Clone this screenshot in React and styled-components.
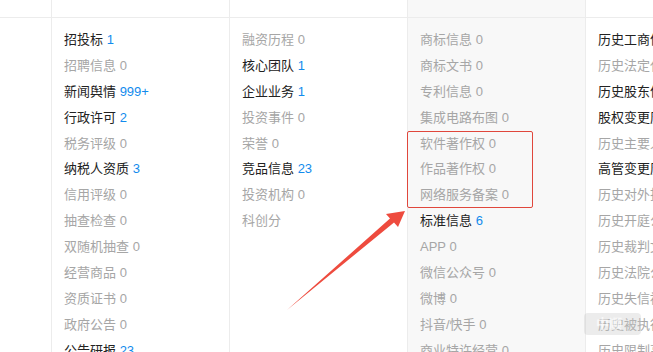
import React from "react";
import styled, { createGlobalStyle } from "styled-components";

const Global = createGlobalStyle`
  html, body { margin: 0; padding: 0; background: #fff; overflow: hidden; }
  body { width: 653px; height: 352px; font-family: "Liberation Sans", "Noto Sans CJK SC", sans-serif; }
  #root { position: relative; width: 653px; height: 352px; overflow: hidden; }
`;

const Table = styled.div`
  display: grid;
  grid-template-columns: 51px 178px 178px 178px 178px;
  margin-top: -30px;
  width: 764px;
`;

const HeadCell = styled.div`
  height: 48px;
  box-sizing: border-box;
  padding-bottom: 5px;
  border-bottom: 1px solid #ececec;
  border-left: ${(p) => (p.$first ? "none" : "1px solid #ececec")};
  background: ${(p) => (p.$active ? "#f8f8f8" : "#fff")};
  display: flex;
  align-items: center;
  justify-content: center;
  font-size: 14px;
  font-weight: bold;
  color: ${(p) => p.$color || "#222"};
`;

const Col = styled.div`
  border-left: ${(p) => (p.$first ? "none" : "1px solid #ececec")};
  background: ${(p) => (p.$active ? "#f8f8f8" : "#fff")};
  padding: 9px 0 0 12px;
  height: 400px;
`;

const Item = styled.div`
  height: 25.9px;
  line-height: 25.9px;
  font-size: 13px;
  white-space: nowrap;
  color: ${(p) => (p.$on ? "#222" : "#a6a6a6")};
`;

const Count = styled.span`
  color: ${(p) => (p.$on ? "#128bed" : "#a6a6a6")};
`;

const Mark = styled.div`
  position: absolute;
  left: 407px;
  top: 131px;
  width: 124px;
  height: 75px;
  border: 1px solid #e0473c;
  border-radius: 2px;
  pointer-events: none;
`;

const Arrow = styled.svg`
  position: absolute;
  left: 0;
  top: 0;
  pointer-events: none;
`;

const Watermark = styled.div`
  position: absolute;
  left: 584px;
  top: 313px;
  width: 57px;
  height: 22px;
  border-radius: 4px;
  background: rgba(200, 200, 200, 0.35);
  color: rgba(255, 255, 255, 0.7);
  font-size: 13px;
  font-weight: bold;
  line-height: 22px;
  padding-left: 12px;
  box-sizing: border-box;
`;

const cols = [
  [
    ["招投标", "1", 1], ["招聘信息", "0"], ["新闻舆情", "999+", 1], ["行政许可", "2", 1],
    ["税务评级", "0"], ["纳税人资质", "3", 1], ["信用评级", "0"], ["抽查检查", "0"],
    ["双随机抽查", "0"], ["经营商品", "0"], ["资质证书", "0"], ["政府公告", "0"], ["公告研报", "23", 1],
  ],
  [
    ["融资历程", "0"], ["核心团队", "1", 1], ["企业业务", "1", 1], ["投资事件", "0"],
    ["荣誉", "0"], ["竞品信息", "23", 1], ["投资机构", "0"], ["科创分", ""],
  ],
  [
    ["商标信息", "0"], ["商标文书", "0"], ["专利信息", "0"], ["集成电路布图", "0"],
    ["软件著作权", "0"], ["作品著作权", "0"], ["网络服务备案", "0"], ["标准信息", "6", 1],
    ["APP", "0"], ["微信公众号", "0"], ["微博", "0"], ["抖音/快手", "0"], ["商业特许经营", "0"],
  ],
  [
    ["历史工商信息", "", 1], ["历史法定代表人", ""], ["历史股东信息", "", 1], ["股权变更历史", "", 1],
    ["历史主要人员", ""], ["高管变更历史", "", 1], ["历史对外投资", ""], ["历史开庭公告", ""],
    ["历史裁判文书", ""], ["历史法院公告", ""], ["历史失信被执行人", ""], ["历史被执行人", ""], ["历史限制高消费", ""],
  ],
];

const heads = [
  { t: "经营信息" },
  { t: "公司发展" },
  { t: "知识产权", c: "#128bed", a: true },
  { t: "历史信息", c: "#f56c2d" },
];

export default function App() {
  return (
    <>
      <Global />
      <Table>
        <HeadCell $first />
        {heads.map((h) => (
          <HeadCell key={h.t} $color={h.c} $active={h.a}>{h.t}</HeadCell>
        ))}
        <Col $first />
        {cols.map((list, i) => (
          <Col key={i} $active={i === 2}>
            {list.map(([label, n, on]) => (
              <Item key={label} $on={on}>
                {label}
                {n !== "" && <> <Count $on={on}>{n}</Count></>}
              </Item>
            ))}
          </Col>
        ))}
      </Table>
      <Mark />
      <Arrow width="653" height="352" viewBox="0 0 653 352">
        <polygon
          points="405,211 386,214 390,218.5 287,310 394,222.5 398,227"
          fill="#ee4b3e"
        />
      </Arrow>
      <Watermark>中顺</Watermark>
    </>
  );
}
